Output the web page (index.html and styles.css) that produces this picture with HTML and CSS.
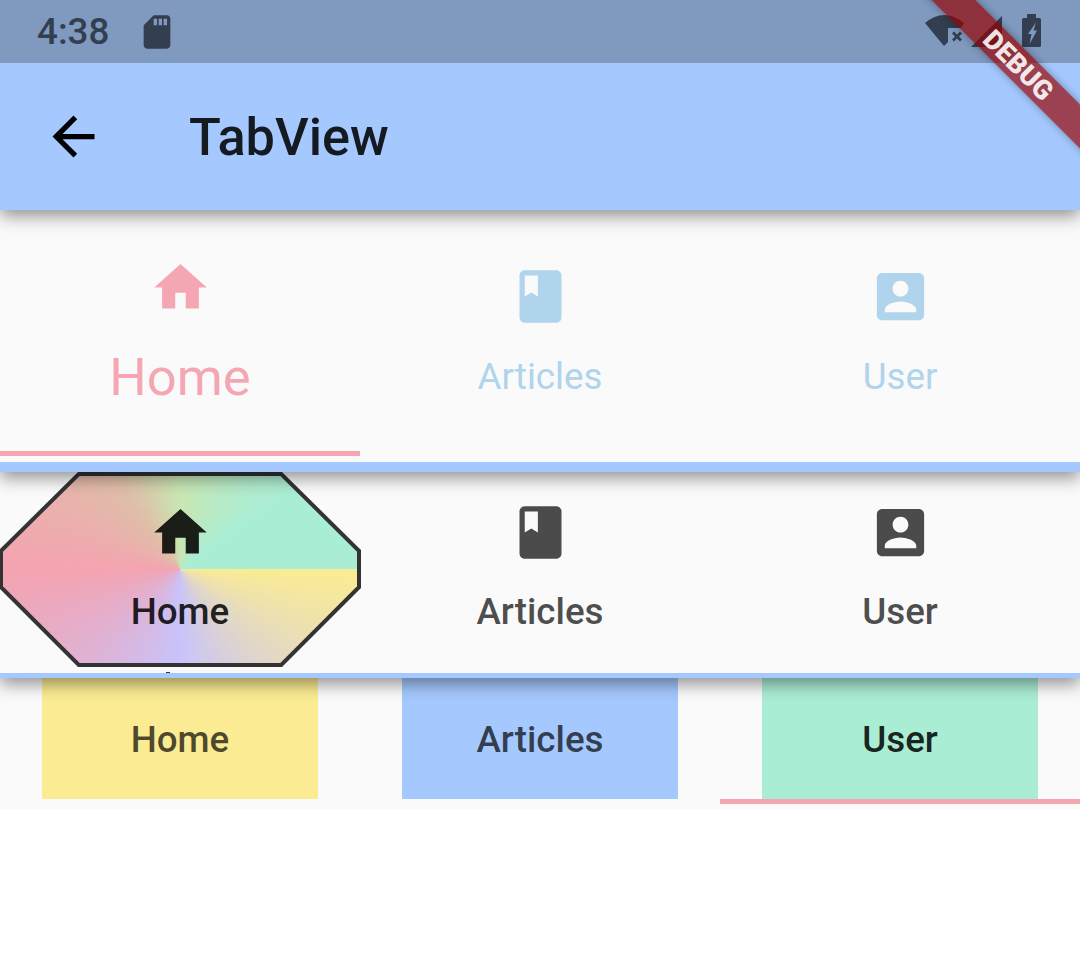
FILE: index.html
```html
<!DOCTYPE html>
<html lang="en">
<head>
    <meta charset="UTF-8">
    <title>TabView</title>
    <link rel="stylesheet" href="styles.css">
</head>
<body>
    <!-- Status bar -->
    <div class="status-bar">
        <span class="status-time">4:38</span>
        <svg class="status-sd" viewBox="0 0 24 24"><path d="M18 2h-8L4.020 8 4 20c0 1.100.9 2 2 2h12c1.100 0 2-.9 2-2V4c0-1.100-.9-2-2-2zm-6 6h-2V4h2v4zm3 0h-2V4h2v4zm3 0h-2V4h2v4z"/></svg>
        <div class="status-icons">
            <svg class="status-wifi" viewBox="0 0 42 34"><path d="M1 9Q20-7 40 9L37 14H24V28L20 32ZM28 19.500L30 17.500 33 20.500 36 17.500 38 19.500 35 22.500 38 25.500 36 27.500 33 24.500 30 27.500 28 25.500 31 22.500Z"/></svg>
            <svg class="status-signal" viewBox="0 0 31 31"><path d="M31 0V31H0Z"/></svg>
            <svg class="status-battery" viewBox="0 0 19 33"><path fill-rule="evenodd" d="M5 0H14V4H17.500Q19 4 19 5.500V31.500Q19 33 17.500 33H1.500Q0 33 0 31.500V5.500Q0 4 1.500 4H5ZM14 8.500 6 20H9.500L7.500 30 15 16.500H11.500Z"/></svg>
        </div>
    </div>

    <!-- App bar -->
    <header class="app-bar">
        <svg class="back-icon" viewBox="0 0 24 24"><path d="M20 11H7.830l5.590-5.590L12 4l-8 8 8 8 1.410-1.410L7.830 13H20v-2z"/></svg>
        <h1 class="app-title">TabView</h1>
    </header>

    <!-- Tabs with growing selected label -->
    <section class="tabs tabs-large">
        <div class="tab tab-pink">
            <svg class="tab-icon" viewBox="0 0 24 24"><path d="M10 20v-6h4v6h5v-8h3L12 3 2 12h3v8z"/></svg>
            <span class="tab-label">Home</span>
            <i class="indicator"></i>
        </div>
        <div class="tab tab-sky">
            <svg class="tab-icon" viewBox="0 0 24 24"><path d="M18 2H6c-1.100 0-2 .9-2 2v16c0 1.100.9 2 2 2h12c1.100 0 2-.9 2-2V4c0-1.100-.9-2-2-2zM6 4h5v8l-2.500-1.500L6 12V4z"/></svg>
            <span class="tab-label">Articles</span>
        </div>
        <div class="tab tab-sky">
            <svg class="tab-icon" viewBox="0 0 24 24"><path d="M3 5v14c0 1.100.89 2 2 2h14c1.100 0 2-.9 2-2V5c0-1.100-.9-2-2-2H5c-1.110 0-2 .9-2 2zm12 4c0 1.660-1.340 3-3 3s-3-1.340-3-3 1.340-3 3-3 3 1.340 3 3zm-9 8c0-2 4-3.100 6-3.100s6 1.100 6 3.100v1H6v-1z"/></svg>
            <span class="tab-label">User</span>
        </div>
    </section>

    <!-- Tabs with beveled sweep indicator -->
    <section class="tabs tabs-bevel">
        <div class="tab tab-active">
            <div class="hex"></div>
            <i class="tick"></i>
            <svg class="tab-icon" viewBox="0 0 24 24"><path d="M10 20v-6h4v6h5v-8h3L12 3 2 12h3v8z"/></svg>
            <span class="tab-label">Home</span>
        </div>
        <div class="tab">
            <svg class="tab-icon" viewBox="0 0 24 24"><path d="M18 2H6c-1.100 0-2 .9-2 2v16c0 1.100.9 2 2 2h12c1.100 0 2-.9 2-2V4c0-1.100-.9-2-2-2zM6 4h5v8l-2.500-1.500L6 12V4z"/></svg>
            <span class="tab-label">Articles</span>
        </div>
        <div class="tab">
            <svg class="tab-icon" viewBox="0 0 24 24"><path d="M3 5v14c0 1.100.89 2 2 2h14c1.100 0 2-.9 2-2V5c0-1.100-.9-2-2-2H5c-1.110 0-2 .9-2 2zm12 4c0 1.660-1.340 3-3 3s-3-1.340-3-3 1.340-3 3-3 3 1.340 3 3zm-9 8c0-2 4-3.100 6-3.100s6 1.100 6 3.100v1H6v-1z"/></svg>
            <span class="tab-label">User</span>
        </div>
    </section>

    <!-- Tabs with coloured tiles -->
    <section class="tabs tabs-tiles">
        <div class="tab">
            <div class="tile tile-yellow">Home</div>
        </div>
        <div class="tab">
            <div class="tile tile-blue">Articles</div>
        </div>
        <div class="tab">
            <div class="tile tile-green tile-active">User</div>
            <i class="indicator"></i>
        </div>
    </section>

    <div class="debug-banner"><span>DEBUG</span></div>
</body>
</html>
```

FILE: styles.css
```css
/* General */
body {
    margin: 0;
    height: 972px;
    overflow: hidden;
    position: relative;
    background: #FFFFFF;
    font-family: Roboto, 'Noto Sans', sans-serif;
    color: rgba(0, 0, 0, 0.7);
}

/* Status bar */
.status-bar {
    height: 63px;
    background: #7F99BF;
    display: flex;
    align-items: center;
    padding-left: 37px;
    color: #333F50;
    fill: #333F50;
    position: relative;
    z-index: 5;
}

.status-time {
    font-size: 36.750px;
    font-weight: 500;
    width: 100px;
    line-height: 66px;
}

.status-sd {
    width: 40px;
    height: 40px;
}

.status-icons {
    margin-left: auto;
    display: flex;
    align-items: flex-start;
    height: 63px;
}

.status-wifi {
    width: 42px;
    height: 34px;
    margin: 14px 5px 0 0;
}

.status-signal {
    width: 31px;
    height: 31px;
    margin: 16px 20px 0 0;
}

.status-battery {
    width: 19px;
    height: 33px;
    margin: 14px 39px 0 0;
}

/* App bar */
.app-bar {
    height: 147px;
    background: #A5C9FF;
    display: flex;
    align-items: center;
    box-shadow: 0 6px 16px rgba(0, 0, 0, 0.42);
    position: relative;
    z-index: 4;
}

.back-icon {
    width: 63px;
    height: 63px;
    margin-left: 42px;
}

.app-title {
    margin: 2px 0 0 84px;
    font-size: 52.250px;
    font-weight: 500;
    color: rgba(0, 0, 0, 0.87);
}

/* Tab rows */
.tabs {
    display: grid;
    grid-template-columns: repeat(3, 1fr);
    background: #FAFAFA;
    position: relative;
}

.tab {
    position: relative;
    display: flex;
    flex-direction: column;
    align-items: center;
}

.tab-icon {
    width: 63px;
    height: 63px;
    fill: currentColor;
    position: relative;
}

.tab-label {
    position: relative;
    font-size: 36.750px;
    font-weight: 500;
    line-height: 44px;
}

.indicator {
    align-self: stretch;
    height: 5px;
    background: #F5A6B3;
    margin-top: auto;
}

/* First row */
.tabs-large {
    height: 252px;
    border-bottom: 10px solid #A5C9FF;
    box-shadow: 0 6px 16px rgba(0, 0, 0, 0.42);
    z-index: 3;
}

.tabs-large .tab {
    padding-top: 55px;
}

.tabs-large .tab-label {
    margin-top: 27px;
    font-weight: 400;
}

.tab-sky {
    color: #AFD4EC;
}

.tab-pink {
    color: #F5A6B3;
    padding-top: 46px !important;
    padding-bottom: 6px;
}

.tab-pink .tab-label {
    font-size: 52.500px;
    line-height: 56px;
    margin-top: 30px;
}

/* Second row */
.tabs-bevel {
    height: 201px;
    border-bottom: 5px solid #A5C9FF;
    box-shadow: 0 6px 16px rgba(0, 0, 0, 0.42);
    z-index: 2;
}

.tabs-bevel .tab {
    padding-top: 29px;
}

.tabs-bevel .tab-label {
    margin-top: 26px;
}

.tab-active {
    color: rgba(0, 0, 0, 0.87);
}

.hex {
    position: absolute;
    left: -1px;
    top: 0;
    width: 362px;
    height: 195px;
    background: #333333;
    clip-path: polygon(79px 0, 283px 0, 362px 78px, 362px 116px, 283px 195px, 79px 195px, 0 116px, 0 78px);
}

.hex::before {
    content: "";
    position: absolute;
    inset: 0;
    background: conic-gradient(from 90deg at 181px 97px, #FBEC93 0deg, #C8C3FB 90deg, #F4A3B1 180deg, #DFBFA8 235deg, #C8E6B2 270deg, #AAEDD5 325deg, #AAEDD5 360deg);
    clip-path: polygon(80.660px 4px, 281.340px 4px, 358px 79.660px, 358px 114.340px, 281.340px 191px, 80.660px 191px, 4px 114.340px, 4px 79.660px);
}

.tick {
    position: absolute;
    left: 166px;
    top: 199.500px;
    width: 4px;
    height: 1px;
    background: #333333;
}

/* Third row */
.tabs-tiles {
    height: 131px;
    z-index: 1;
}

.tile {
    width: 276px;
    height: 121px;
    padding-top: 2px;
    box-sizing: border-box;
    display: flex;
    align-items: center;
    justify-content: center;
    font-size: 36.750px;
    font-weight: 500;
}

.tile-yellow {
    background: #FBEC93;
}

.tile-blue {
    background: #A5C9FF;
}

.tile-green {
    background: #AAEDD5;
}

.tile-active {
    color: rgba(0, 0, 0, 0.87);
}

.tabs-tiles .indicator {
    margin: 0 0 5px;
}

/* Debug ribbon */
.debug-banner {
    position: absolute;
    left: 865px;
    top: 46px;
    width: 300px;
    height: 31px;
    padding-left: 10px;
    box-sizing: border-box;
    transform: rotate(45deg);
    background: rgba(150, 0, 0, 0.68);
    box-shadow: 0 0 8px rgba(0, 0, 0, 0.35);
    display: flex;
    align-items: center;
    justify-content: center;
    color: rgba(255, 255, 255, 0.9);
    font-size: 27px;
    font-weight: 900;
    z-index: 10;
}
```
